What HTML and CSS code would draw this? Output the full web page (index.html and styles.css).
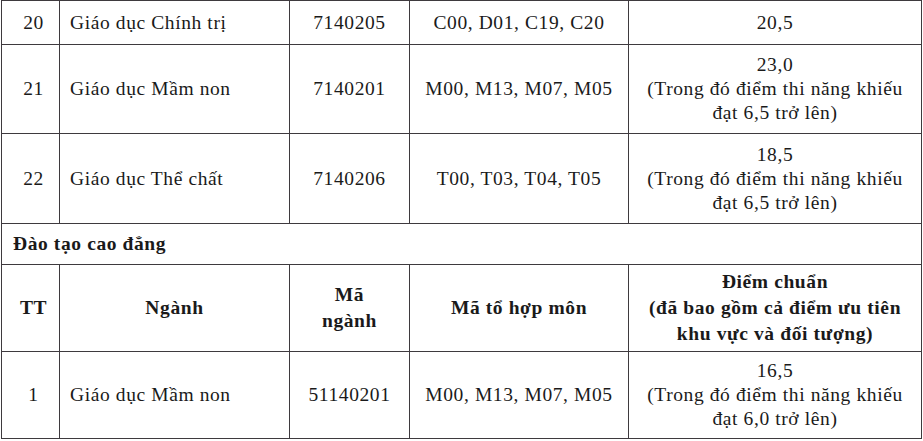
FILE: index.html
```html
<!DOCTYPE html>
<html lang="vi">
<head>
<meta charset="utf-8">
<title>Điểm chuẩn</title>
<link rel="stylesheet" href="styles.css">
</head>
<body>
<table class="scores">
  <colgroup>
    <col class="c-tt">
    <col class="c-name">
    <col class="c-code">
    <col class="c-combo">
    <col class="c-score">
  </colgroup>
  <tbody>
    <tr class="r-short">
      <td class="tt">20</td>
      <td class="name">Giáo dục Chính trị</td>
      <td class="center">7140205</td>
      <td class="center">C00, D01, C19, C20</td>
      <td class="center">20,5</td>
    </tr>
    <tr class="r-tall">
      <td class="tt">21</td>
      <td class="name">Giáo dục Mầm non</td>
      <td class="center">7140201</td>
      <td class="center">M00, M13, M07, M05</td>
      <td class="center">23,0<br>(Trong đó điểm thi năng khiếu<br>đạt 6,5 trở lên)</td>
    </tr>
    <tr class="r-tall2">
      <td class="tt">22</td>
      <td class="name">Giáo dục Thể chất</td>
      <td class="center">7140206</td>
      <td class="center">T00, T03, T04, T05</td>
      <td class="center">18,5<br>(Trong đó điểm thi năng khiếu<br>đạt 6,5 trở lên)</td>
    </tr>
    <tr class="r-section">
      <td class="section" colspan="5">Đào tạo cao đẳng</td>
    </tr>
    <tr class="r-head">
      <th class="tt">TT</th>
      <th>Ngành</th>
      <th>Mã<br>ngành</th>
      <th>Mã tổ hợp môn</th>
      <th>Điểm chuẩn<br>(đã bao gồm cả điểm ưu tiên<br>khu vực và đối tượng)</th>
    </tr>
    <tr class="r-last">
      <td class="tt">1</td>
      <td class="name">Giáo dục Mầm non</td>
      <td class="center">51140201</td>
      <td class="center">M00, M13, M07, M05</td>
      <td class="center">16,5<br>(Trong đó điểm thi năng khiếu<br>đạt 6,0 trở lên)</td>
    </tr>
  </tbody>
</table>
</body>
</html>
```

FILE: styles.css
```css
html, body {
  margin: 0;
  padding: 0;
  background: #ffffff;
}

body {
  font-family: "Liberation Serif", "Times New Roman", serif;
  font-size: 19.5px;
  letter-spacing: 0.6px;
  color: #1a1a1a;
}

.scores {
  border-collapse: collapse;
  table-layout: fixed;
  width: 920px;
  margin-left: 1px;
}

.c-tt { width: 58px; }
.c-name { width: 230px; }
.c-code { width: 120px; }
.c-combo { width: 219px; }
.c-score { width: 293px; }

.scores td,
.scores th {
  border: 1px solid #3e3a3e;
  padding: 0;
  line-height: 24px;
  vertical-align: middle;
}

.scores th {
  font-family: "Liberation Serif", "Times New Roman", serif;
  font-weight: 700;
  text-align: center;
  line-height: 26px;
}

.tt {
  text-align: center;
  padding-left: 6px !important;
}

.name {
  text-align: left;
  padding-left: 10px !important;
}

.center {
  text-align: center;
}

.section {
  font-weight: 700;
  text-align: left;
  padding-left: 11px !important;
}

.r-short { height: 44px; }
.r-tall { height: 89px; }
.r-tall2 { height: 90px; }
.r-section { height: 41px; }
.r-head { height: 87px; }
.r-last { height: 87px; }
```
